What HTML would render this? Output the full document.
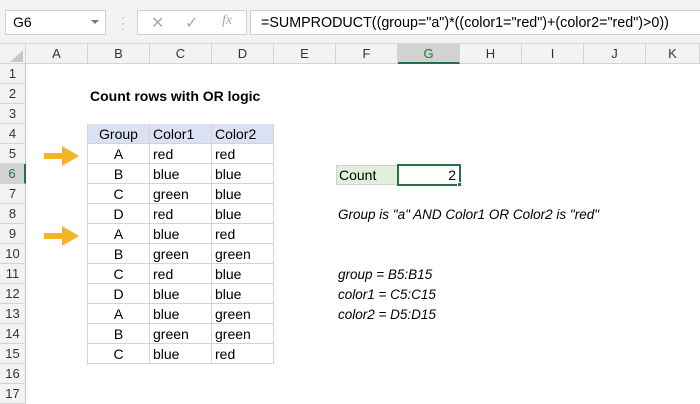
<!DOCTYPE html>
<html><head><style>
*{margin:0;padding:0;box-sizing:border-box}
body{width:700px;height:400px;overflow:hidden;background:#fff;font-family:"Liberation Sans",Calibri,sans-serif;font-size:13px;color:#000;position:relative}
.a{position:absolute}
.top{left:0;top:0;width:700px;height:44px;background:#f3f3f3;border-bottom:1px solid #d4d4d4}
.box{background:#fff;border:1px solid #d0d0d0}
.ch{top:44px;height:20px;background:#f3f3f3;border-right:1px solid #d4d4d4;border-bottom:1px solid #d4d4d4;text-align:center;line-height:20px;color:#333;font-size:13px}
.rh{left:0;width:26px;height:20px;background:#f3f3f3;border-bottom:1px solid #d4d4d4;border-right:1px solid #c8c8c8;text-align:center;line-height:20px;color:#333;font-size:13px}
.c{height:20px;line-height:21px;border-right:1px solid #d4d4d4;border-bottom:1px solid #d4d4d4;padding-left:3px;font-size:14px}
.ctr{text-align:center;padding-left:0}
.i{font-style:italic;font-size:13.5px}
</style></head><body>
<div class="a top"></div>
<div class="a box" style="left:5px;top:10px;width:101px;height:25px;line-height:23px;padding-left:7px;font-size:14px">G6</div>
<div class="a" style="left:91px;top:20px;width:0;height:0;border-left:4px solid transparent;border-right:4px solid transparent;border-top:4px solid #777"></div>
<div class="a" style="left:121px;top:14px;color:#aaa;font-size:12px;line-height:6px">·<br>·<br>·</div>
<div class="a box" style="left:137px;top:10px;width:110px;height:25px"></div>
<div class="a" style="left:151px;top:13px;color:#aaa;font-size:16px">✕</div>
<div class="a" style="left:185px;top:13px;color:#aaa;font-size:16px">✓</div>
<div class="a" style="left:222px;top:13px;color:#aaa;font-size:14px;font-style:italic;font-family:'Liberation Serif',serif">fx</div>
<div class="a box" style="left:250px;top:10px;width:450px;height:25px;line-height:24px;padding-left:10px;font-size:14.3px;border-right:none">=SUMPRODUCT((group="a")*((color1="red")+(color2="red")&gt;0))</div>
<div class="a ch" style="left:0;width:26px"></div>
<div class="a" style="left:10px;top:50px;width:0;height:0;border-left:13px solid transparent;border-bottom:12px solid #c8c8c8"></div>
<div class="a ch" style="left:26px;width:62px">A</div>
<div class="a ch" style="left:88px;width:62px">B</div>
<div class="a ch" style="left:150px;width:62px">C</div>
<div class="a ch" style="left:212px;width:62px">D</div>
<div class="a ch" style="left:274px;width:62px">E</div>
<div class="a ch" style="left:336px;width:62px">F</div>
<div class="a ch" style="left:398px;width:62px;background:#d2d2d2;color:#217346;border-bottom:2px solid #217346">G</div>
<div class="a ch" style="left:460px;width:62px">H</div>
<div class="a ch" style="left:522px;width:62px">I</div>
<div class="a ch" style="left:584px;width:62px">J</div>
<div class="a ch" style="left:646px;width:54px">K</div>
<div class="a rh" style="top:64px">1</div>
<div class="a rh" style="top:84px">2</div>
<div class="a rh" style="top:104px">3</div>
<div class="a rh" style="top:124px">4</div>
<div class="a rh" style="top:144px">5</div>
<div class="a rh" style="top:164px;background:#d2d2d2;color:#217346;border-right:2px solid #217346">6</div>
<div class="a rh" style="top:184px">7</div>
<div class="a rh" style="top:204px">8</div>
<div class="a rh" style="top:224px">9</div>
<div class="a rh" style="top:244px">10</div>
<div class="a rh" style="top:264px">11</div>
<div class="a rh" style="top:284px">12</div>
<div class="a rh" style="top:304px">13</div>
<div class="a rh" style="top:324px">14</div>
<div class="a rh" style="top:344px">15</div>
<div class="a rh" style="top:364px">16</div>
<div class="a rh" style="top:384px">17</div>
<div class="a" style="left:90px;top:88px;font-weight:bold;font-size:14px">Count rows with OR logic</div>
<div class="a" style="left:87px;top:124px;width:1px;height:241px;background:#d4d4d4"></div>
<div class="a" style="left:88px;top:124px">
<div style="display:flex;background:#dae1f2"><div class="c ctr" style="width:62px">Group</div><div class="c" style="width:62px">Color1</div><div class="c" style="width:62px">Color2</div></div>
<div style="display:flex"><div class="c ctr" style="width:62px">A</div><div class="c" style="width:62px">red</div><div class="c" style="width:62px">red</div></div>
<div style="display:flex"><div class="c ctr" style="width:62px">B</div><div class="c" style="width:62px">blue</div><div class="c" style="width:62px">blue</div></div>
<div style="display:flex"><div class="c ctr" style="width:62px">C</div><div class="c" style="width:62px">green</div><div class="c" style="width:62px">blue</div></div>
<div style="display:flex"><div class="c ctr" style="width:62px">D</div><div class="c" style="width:62px">red</div><div class="c" style="width:62px">blue</div></div>
<div style="display:flex"><div class="c ctr" style="width:62px">A</div><div class="c" style="width:62px">blue</div><div class="c" style="width:62px">red</div></div>
<div style="display:flex"><div class="c ctr" style="width:62px">B</div><div class="c" style="width:62px">green</div><div class="c" style="width:62px">green</div></div>
<div style="display:flex"><div class="c ctr" style="width:62px">C</div><div class="c" style="width:62px">red</div><div class="c" style="width:62px">blue</div></div>
<div style="display:flex"><div class="c ctr" style="width:62px">D</div><div class="c" style="width:62px">blue</div><div class="c" style="width:62px">blue</div></div>
<div style="display:flex"><div class="c ctr" style="width:62px">A</div><div class="c" style="width:62px">blue</div><div class="c" style="width:62px">green</div></div>
<div style="display:flex"><div class="c ctr" style="width:62px">B</div><div class="c" style="width:62px">green</div><div class="c" style="width:62px">green</div></div>
<div style="display:flex"><div class="c ctr" style="width:62px">C</div><div class="c" style="width:62px">blue</div><div class="c" style="width:62px">red</div></div>
</div>
<svg class="a" style="left:40px;top:145px" width="42" height="100"><path d="M4 8h18v-7l17 10-17 10v-7H4z" fill="#f2b624"/><path d="M4 88h18v-7l17 10-17 10v-7H4z" fill="#f2b624"/></svg>
<div class="a" style="left:336px;top:165px;width:62px;height:20px;background:#e2efda;border:1px solid #d0d0d0;line-height:19px;padding-left:2px;font-size:14px">Count</div>
<div class="a" style="left:397px;top:164px;width:64px;height:22px;border:2px solid #217346;text-align:right;padding-right:3px;line-height:19px;font-size:14px">2</div>
<div class="a" style="left:457px;top:182px;width:5px;height:5px;background:#217346;border:1px solid #fff"></div>
<div class="a i" style="left:338px;top:207px">Group is "a" AND Color1 OR Color2 is "red"</div>
<div class="a i" style="left:338px;top:267px">group = B5:B15</div>
<div class="a i" style="left:338px;top:287px">color1 = C5:C15</div>
<div class="a i" style="left:338px;top:307px">color2 = D5:D15</div>
</body></html>
